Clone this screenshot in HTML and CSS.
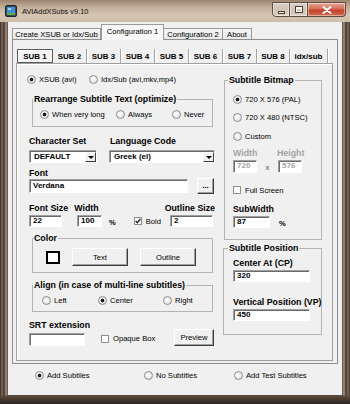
FILE: index.html
```html
<!DOCTYPE html>
<html lang="en">
<head>
  <meta charset="UTF-8">
  <title>AVIAddXSubs v9.10</title>
  <link rel="stylesheet" href="styles.css">
</head>
<body>
<div class="window">
  <div class="titlebar">
    <svg class="app-icon" width="12" height="12" viewBox="0 0 12 12">
      <rect x="0.5" y="0.5" width="11" height="11" rx="1.5" fill="#3a4a55" stroke="#1d262c"/>
      <rect x="2" y="2" width="8" height="6" fill="#3f8fd6"/>
      <rect x="2" y="8" width="8" height="2" fill="#5bb04a"/>
      <rect x="3" y="3" width="3" height="2" fill="#9fd3ff"/>
    </svg>
    <span class="title">AVIAddXSubs v9.10</span>
    <div class="caption">
      <span class="cap-btn cap-min"><i></i></span>
      <span class="cap-btn cap-max"><i></i></span>
      <span class="cap-btn cap-close">
        <svg width="10" height="8" viewBox="0 0 10 8"><path d="M1.5 1 L8.5 7 M8.5 1 L1.5 7" stroke="#fff" stroke-width="2" stroke-linecap="round"/></svg>
      </span>
    </div>
  </div>

  <div class="client">
    <div class="tabs">
      <span class="tab tab-create">Create XSUB or Idx/Sub</span>
      <span class="tab tab-conf1 active">Configuration 1</span>
      <span class="tab tab-conf2">Configuration 2</span>
      <span class="tab tab-about">About</span>
    </div>

    <div class="tab-page">
      <div class="subtabs">
        <span class="subtab st-1 active">SUB 1</span>
        <span class="subtab">SUB 2</span>
        <span class="subtab">SUB 3</span>
        <span class="subtab">SUB 4</span>
        <span class="subtab">SUB 5</span>
        <span class="subtab">SUB 6</span>
        <span class="subtab">SUB 7</span>
        <span class="subtab st-8">SUB 8</span>
        <span class="subtab st-idx">idx/sub</span>
      </div>

      <div class="sub-page">
        <div class="col-left">
          <div class="opt-row top-opts">
            <span class="opt w-xsub"><span class="radio on"></span>XSUB (avi)</span>
            <span class="opt"><span class="radio"></span>Idx/Sub (avi,mkv,mp4)</span>
          </div>

          <fieldset class="group rearrange">
            <legend>Rearrange Subtitle Text (optimize)</legend>
            <div class="opt-row">
              <span class="opt w-long"><span class="radio on"></span>When very long</span>
              <span class="opt w-always"><span class="radio"></span>Always</span>
              <span class="opt"><span class="radio"></span>Never</span>
            </div>
          </fieldset>

          <div class="field-row charset-labels">
            <span class="lbl w-charset">Character Set</span>
            <span class="lbl">Language Code</span>
          </div>
          <div class="field-row combos">
            <div class="combo combo-charset"><span class="combo-text">DEFAULT</span><span class="combo-btn"><i></i></span></div>
            <div class="combo combo-lang"><span class="combo-text">Greek (el)</span><span class="combo-btn"><i></i></span></div>
          </div>

          <div class="lbl font-label">Font</div>
          <div class="field-row font-row">
            <div class="edit font-edit">Verdana</div>
            <div class="btn dots-btn">...</div>
          </div>

          <div class="field-row size-labels">
            <span class="lbl w-fsize">Font Size</span>
            <span class="lbl w-width">Width</span>
            <span class="lbl">Outline Size</span>
          </div>
          <div class="field-row size-row">
            <div class="edit size-edit">22</div>
            <div class="edit width-edit">100</div>
            <span class="pct">%</span>
            <span class="check on"><svg width="6" height="6" viewBox="0 0 6 6"><path d="M0.6 3 L2.3 4.7 L5.4 1" fill="none" stroke="#222" stroke-width="1.3"/></svg></span>
            <span class="bold-text">Bold</span>
            <div class="edit outline-edit">2</div>
          </div>

          <fieldset class="group color-group">
            <legend>Color</legend>
            <div class="field-row color-row">
              <span class="swatch"></span>
              <div class="btn color-btn">Text</div>
              <div class="btn color-btn">Outline</div>
            </div>
          </fieldset>

          <fieldset class="group align-group">
            <legend>Align (in case of multi-line subtitles)</legend>
            <div class="opt-row">
              <span class="opt w-left"><span class="radio"></span>Left</span>
              <span class="opt w-center"><span class="radio on"></span>Center</span>
              <span class="opt"><span class="radio"></span>Right</span>
            </div>
          </fieldset>

          <div class="lbl srt-label">SRT extension</div>
          <div class="field-row srt-row">
            <div class="edit srt-edit"></div>
            <span class="check opaque-check"></span>
            <span class="opaque-text">Opaque Box</span>
            <div class="btn preview-btn">Preview</div>
          </div>
        </div>

        <div class="col-right">
          <fieldset class="group bitmap">
            <legend>Subtitle Bitmap</legend>
            <div class="opt bm-1"><span class="radio on"></span>720 X 576 (PAL)</div>
            <div class="opt bm-2"><span class="radio"></span>720 X 480 (NTSC)</div>
            <div class="opt bm-3"><span class="radio"></span>Custom</div>
            <div class="field-row wh-labels">
              <span class="lbl muted w-bmw">Width</span>
              <span class="lbl muted">Height</span>
            </div>
            <div class="field-row wh-row">
              <div class="edit wh-edit muted">720</div>
              <span class="times">x</span>
              <div class="edit wh-edit muted">576</div>
            </div>
            <div class="field-row fullscreen">
              <span class="check"></span>
              <span class="fs-text">Full Screen</span>
            </div>
            <div class="lbl subwidth-label">SubWidth</div>
            <div class="field-row subwidth-row">
              <div class="edit subwidth-edit">87</div>
              <span class="pct">%</span>
            </div>
          </fieldset>

          <fieldset class="group position">
            <legend>Subtitle Position</legend>
            <div class="lbl cp-label">Center At (CP)</div>
            <div class="edit pos-edit">320</div>
            <div class="lbl vp-label">Vertical Position (VP)</div>
            <div class="edit pos-edit">450</div>
          </fieldset>
        </div>
      </div>
    </div>

    <div class="opt-row bottom-opts">
      <span class="opt w-add"><span class="radio on"></span>Add Subtiles</span>
      <span class="opt w-none"><span class="radio"></span>No Subtitles</span>
      <span class="opt"><span class="radio"></span>Add Test Subtitles</span>
    </div>
  </div>
</div>
</body>
</html>
```

FILE: styles.css
```css
* {
  box-sizing: border-box;
}

body {
  margin: 0;
  width: 350px;
  height: 404px;
  overflow: hidden;
  font-family: "Liberation Sans", Arial, sans-serif;
  font-size: 7.6px;
  color: #000;
}

/* window frame */
.window {
  width: 350px;
  height: 404px;
  display: flex;
  flex-direction: column;
  background:
    linear-gradient(to bottom, transparent 395px, #5b4a3e 396px, #2c231e 404px),
    linear-gradient(90deg, #2b2420 0px, #857262 2px, #3c3029 4px, #a89482 6px, #5a4a3e 8px,
      #5a4a3e 342px, #a89482 344px, #3c3029 346px, #857262 348px, #2b2420 350px);
}

.titlebar {
  height: 22px;
  display: flex;
  align-items: center;
  padding-left: 5px;
  background: linear-gradient(to bottom, #9d846f 0%, #c4b19c 35%, #d5c6b3 70%, #cdbca8 100%);
}

.app-icon {
  margin-top: -1px;
}

.title {
  margin-left: 5px;
  font-size: 7.4px;
  color: #111;
}

.caption {
  margin-left: auto;
  margin-right: 4px;
  align-self: flex-start;
  margin-top: 2px;
  display: flex;
}

.cap-btn {
  height: 15px;
  width: 18px;
  display: flex;
  align-items: center;
  justify-content: center;
  border: 1px solid #5e4c40;
  border-left: none;
  background: linear-gradient(to bottom, rgba(255,255,255,0.55), rgba(255,255,255,0.2) 50%, rgba(255,255,255,0.1));
  box-shadow: inset 0 0 0 1px rgba(255,255,255,0.45);
}

.cap-min {
  border-left: 1px solid #5e4c40;
  border-radius: 0 0 0 4px;
}

.cap-min i {
  width: 7px;
  height: 3px;
  margin-top: 5px;
  background: #fff;
  border: 1px solid #4b3d33;
}

.cap-max i {
  width: 8px;
  height: 7px;
  border: 1px solid #4b3d33;
  box-shadow: inset 0 0 0 1px #fff, inset 0 2px 0 #fff;
}

.cap-close {
  width: 38px;
  border-radius: 0 0 4px 0;
  background: linear-gradient(to bottom, #e8a796, #d46b55 45%, #c2432c 55%, #d26a4a);
}

/* client area */
.client {
  height: 373px;
  margin: 0 8px;
  background: #f0f0f0;
  display: flex;
  flex-direction: column;
}

.tabs {
  height: 17px;
  margin-left: 4px;
  display: flex;
  align-items: flex-end;
}

.tab {
  height: 11px;
  display: flex;
  align-items: center;
  justify-content: center;
  border: 1px solid #9a9a9a;
  border-bottom: none;
  border-left: none;
  background: linear-gradient(to bottom, #f6f6f6, #e8e8e8);
  white-space: nowrap;
}

.tab-create {
  width: 89px;
  border-left: 1px solid #9a9a9a;
}

.tab.active {
  width: 63px;
  height: 16px;
  margin-bottom: -1px;
  padding-bottom: 2px;
  border-left: 1px solid #9a9a9a;
  background: #f7f7f7;
  position: relative;
  z-index: 1;
}

.tab-conf2 {
  width: 59px;
  border-left: none;
}

.tab-about {
  width: 29px;
}

.tab-page {
  height: 325px;
  margin-left: 4px;
  width: 326px;
  border: 1px solid #8e8f8f;
  background: #f0f0f0;
}

.subtabs {
  margin: 9px 0 0 4px;
  height: 14px;
  display: flex;
}

.subtab {
  width: 34px;
  height: 14px;
  display: flex;
  align-items: center;
  justify-content: center;
  font-weight: bold;
  font-size: 8px;
  border-right: 1px solid #a3a3a3;
  box-shadow: 1px 0 0 #fff;
  white-space: nowrap;
}

.subtab.active {
  width: 36px;
  border: 1px solid #5a5a5a;
  box-shadow: inset 1px 1px 0 #fff;
  background: #f4f4f4;
}

.st-8 {
  width: 33px;
}

.st-idx {
  width: 38px;
}

.sub-page {
  margin-left: 3px;
  width: 317px;
  height: 298px;
  border: 1px solid #a0a0a0;
  box-shadow: inset 1px 1px 0 #fff;
  display: flex;
}

.col-left {
  margin-left: 12px;
  width: 186px;
}

.col-right {
  margin-left: 8px;
  width: 99px;
}

/* common controls */
.opt-row,
.field-row {
  display: flex;
  align-items: center;
}

.opt {
  display: flex;
  align-items: center;
  height: 10px;
  white-space: nowrap;
}

.radio {
  width: 9px;
  height: 9px;
  margin-right: 3px;
  flex: none;
  border-radius: 50%;
  border: 1px solid #8c8c8c;
  background: radial-gradient(circle at 40% 40%, #ffffff, #dadada);
}

.radio.on {
  background:
    radial-gradient(circle, #1c1c1c 0, #1c1c1c 1.6px, transparent 2.2px),
    radial-gradient(circle at 40% 40%, #ffffff, #dadada);
}

.check {
  width: 8px;
  height: 8px;
  flex: none;
  border: 1px solid #8e8f8f;
  background: #fff;
  display: flex;
  align-items: center;
  justify-content: center;
}

.lbl {
  font-weight: bold;
  font-size: 8.8px;
  line-height: 10px;
  height: 10px;
  white-space: nowrap;
}

.muted {
  color: #a3a3a3;
}

.edit {
  height: 12px;
  background: #fff;
  border: 1px solid;
  border-color: #a0a0a0 #fff #fff #a0a0a0;
  box-shadow: inset 1px 1px 0 #6a6a6a;
  font-weight: bold;
  font-size: 8px;
  line-height: 10px;
  padding-left: 3px;
  white-space: nowrap;
  overflow: hidden;
}

.btn {
  display: flex;
  align-items: center;
  justify-content: center;
  background: #f0f0f0;
  border: 1px solid;
  border-color: #fff #3c3c3c #3c3c3c #fff;
  box-shadow: inset -1px -1px 0 #a0a0a0;
  white-space: nowrap;
}

.combo {
  height: 13px;
  display: flex;
  background: #fff;
  border: 1px solid;
  border-color: #a0a0a0 #fff #fff #a0a0a0;
  box-shadow: inset 1px 1px 0 #6a6a6a;
}

.combo-text {
  flex: 1;
  padding: 1px 0 0 4px;
  font-weight: bold;
  font-size: 8px;
  line-height: 10px;
}

.combo-btn {
  width: 11px;
  margin: 1px 0 0 0;
  display: flex;
  align-items: center;
  justify-content: center;
  background: #f0f0f0;
  border: 1px solid;
  border-color: #fff #3c3c3c #3c3c3c #fff;
}

.combo-btn i {
  border-left: 3px solid transparent;
  border-right: 3px solid transparent;
  border-top: 3px solid #000;
}

.group {
  margin: 0;
  padding: 0;
  min-width: 0;
  border: 1px solid #b4b4b4;
}

.group legend {
  padding: 0 1px;
  margin-left: 0;
  font-weight: bold;
  font-size: 8.8px;
  line-height: 10px;
  white-space: nowrap;
}

/* left column */
.top-opts {
  margin: 9px 0 0 -2px;
  height: 12px;
}

.w-xsub { width: 62px; }

.rearrange {
  margin: 9px 0 0 3px;
  width: 181px;
  padding-bottom: 6px;
}

.rearrange .opt-row {
  margin: 4px 0 0 7px;
  height: 12px;
}

.w-long { width: 76px; }
.w-always { width: 56px; }

.charset-labels {
  margin-top: 9px;
}

.w-charset { width: 81px; }

.combos {
  margin-top: 4px;
}

.combo-charset { width: 68px; }

.combo-lang {
  width: 106px;
  margin-left: 12px;
}

.font-label {
  margin-top: 5px;
}

.font-row {
  height: 16px;
  align-items: flex-start;
}

.font-edit {
  width: 159px;
  height: 14px;
  margin-top: 1px;
  line-height: 12px;
}

.dots-btn {
  width: 17px;
  height: 16px;
  margin-left: 9px;
  font-weight: bold;
  font-size: 8px;
  padding-bottom: 2px;
}

.size-labels {
  margin-top: 9px;
}

.w-fsize { width: 47px; }
.w-width { width: 94px; }

.size-row {
  margin-top: 2px;
  height: 12px;
}

.size-edit { width: 33px; }

.width-edit {
  width: 25px;
  margin-left: 15px;
}

.pct {
  margin: 2px 0 0 7px;
  font-weight: bold;
  font-size: 7.6px;
}

.size-row .check {
  margin-left: 18px;
}

.bold-text {
  margin-left: 4px;
}

.outline-edit {
  width: 43px;
  margin-left: 9px;
}

.color-group {
  margin: 6px 0 0 3px;
  width: 181px;
  padding-bottom: 6px;
}

.color-row {
  margin: 5px 0 0 13px;
  height: 18px;
}

.swatch {
  width: 14px;
  height: 13px;
  border: 2px solid #000;
  background: #fff;
}

.color-btn {
  width: 56px;
  height: 18px;
  margin-left: 12px;
}

.align-group {
  margin: 7px 0 0 3px;
  width: 181px;
  padding-bottom: 6px;
}

.align-group .opt-row {
  margin: 5px 0 0 9px;
  height: 10px;
}

.w-left { width: 56px; }
.w-center { width: 65px; }

.srt-label {
  margin-top: 8px;
}

.srt-row {
  margin-top: -1px;
  height: 17px;
}

.srt-edit {
  width: 56px;
  height: 13px;
  margin-top: 3px;
}

.opaque-check {
  margin: 3px 0 0 16px;
}

.opaque-text {
  margin: 2px 0 0 4px;
  white-space: nowrap;
}

.preview-btn {
  width: 40px;
  height: 17px;
  margin: 0 1px 0 auto;
}

/* right column */
.bitmap {
  margin: 11px 0 0 1px;
  width: 98px;
  padding: 0 0 11px 8px;
}

.bitmap legend {
  margin-left: -5px;
}

.bm-1 { margin-top: 9px; }
.bm-2 { margin-top: 8px; }
.bm-3 { margin-top: 9px; }

.wh-labels {
  margin-top: 7px;
}

.w-bmw { width: 44px; }

.wh-row {
  margin-top: 2px;
  height: 13px;
}

.wh-edit {
  width: 24px;
  height: 13px;
}

.times {
  width: 21px;
  text-align: center;
  color: #555;
  font-size: 8px;
  padding-top: 2px;
}

.fullscreen {
  margin-top: 12px;
  height: 10px;
}

.fs-text {
  margin-left: 4px;
}

.subwidth-label {
  margin-top: 9px;
}

.subwidth-row {
  margin-top: 2px;
  height: 12px;
}

.subwidth-edit { width: 37px; }

.subwidth-row .pct {
  margin-left: 9px;
}

.position {
  margin-top: 3px;
  width: 99px;
  padding: 0 0 13px 9px;
}

.position legend {
  margin-left: -5px;
}

.cp-label { margin-top: 5px; }
.vp-label { margin-top: 15px; }

.pos-edit {
  width: 77px;
  margin-top: 2px;
}

/* bottom options */
.bottom-opts {
  margin: 6px 0 0 27px;
  height: 10px;
}

.w-add { width: 109px; }
.w-none { width: 90px; }
```
